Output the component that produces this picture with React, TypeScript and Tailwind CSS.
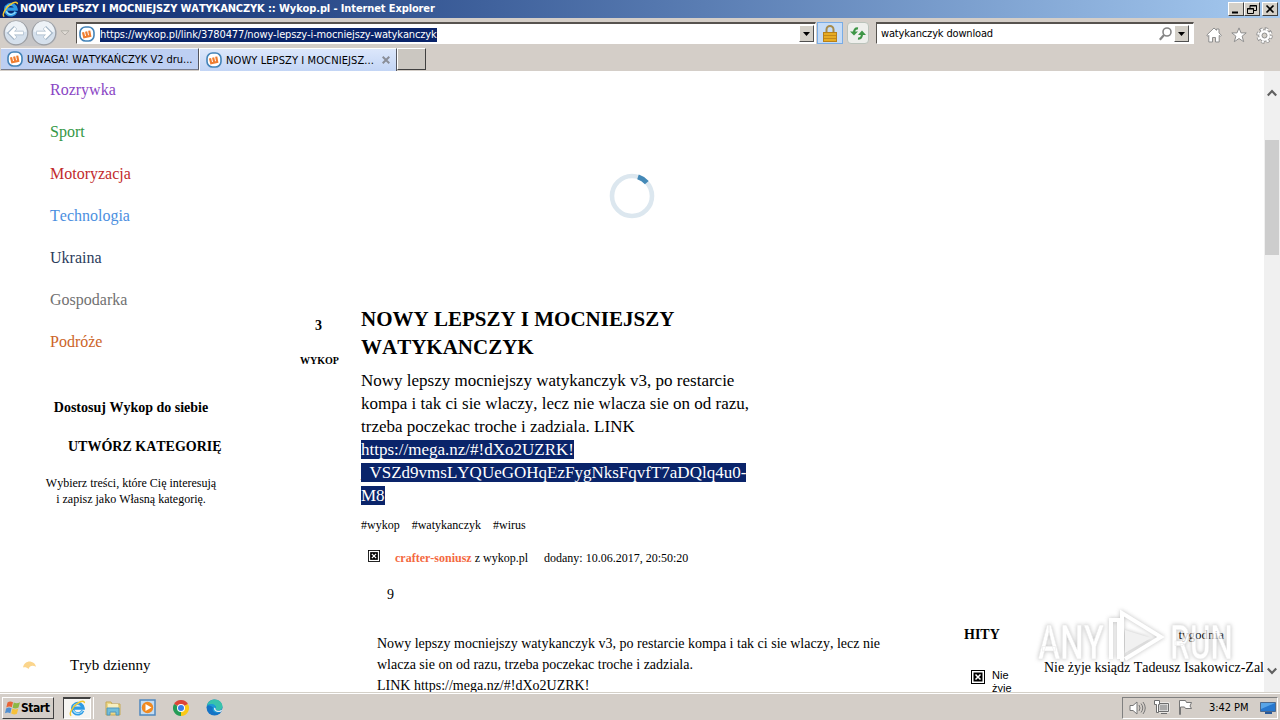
import type { ReactNode } from 'react';

const NAV_ITEMS = [
  { label: 'Rozrywka', color: 'text-[#8a45c4]' },
  { label: 'Sport', color: 'text-[#359846]' },
  { label: 'Motoryzacja', color: 'text-[#c22a2c]' },
  { label: 'Technologia', color: 'text-[#4b8fdf]' },
  { label: 'Ukraina', color: 'text-[#2b3c5c]' },
  { label: 'Gospodarka', color: 'text-[#717171]' },
  { label: 'Podróże', color: 'text-[#cc6428]' },
];

function IeLogo({ size }: { size: number }) {
  return (
    <svg width={size} height={size} viewBox="0 0 18 18" fill="none" className="shrink-0">
      <path d="M14.6 11.3a5.6 5.6 0 1 1 .4-2.6H5.2" stroke="#2f9be4" strokeWidth="3.400" />
      <path d="M14.2 11.6a5.3 5.3 0 0 1-9.600-.8M4.500 7.500q1.500-4 6-3.500" stroke="#a5e2fd" strokeWidth="1.200" />
      <path d="M2.4 16.6C-.6 15 3.4 7.4 9 3.5c4.2-3 7.7-3 7.2-.1" stroke="#f2c62e" strokeWidth="1.5" />
    </svg>
  );
}

function WykopIcon() {
  return (
    <svg width="16" height="16" viewBox="0 0 16 16" fill="none" className="shrink-0">
      <rect x="1" y="1" width="14" height="14" rx="5.500" fill="#fff" stroke="#4383b8" strokeWidth="1.6" />
      <path d="M4 6.2l1.200 5 6-1.400-1-5.200M7.100 5.400l1.100 4.800" stroke="#ef7d30" strokeWidth="2.200" />
    </svg>
  );
}

function WindowButton({ children }: { children: ReactNode }) {
  return (
    <div className="flex h-[14px] w-4 items-center justify-center border border-t-white border-r-[#404040] border-b-[#404040] border-l-white bg-[#d4d0c8]">
      <svg width="12" height="11" viewBox="0 0 12 11" fill="none" stroke="#000">
        {children}
      </svg>
    </div>
  );
}

function TitleBar() {
  return (
    <div className="flex h-[18px] items-center bg-gradient-to-r from-[#0a246a] to-[#a6caf0] pr-0.5 pl-0.5">
      <IeLogo size={17} />
      <span className="flex-1 pl-px text-[11px] leading-[18px] font-bold tracking-[-0.115px] whitespace-nowrap text-white">
        NOWY LEPSZY I MOCNIEJSZY WATYKANCZYK :: Wykop.pl - Internet Explorer
      </span>
      <div className="flex">
        <WindowButton>
          <path d="M2 8.5h6" strokeWidth="2" />
        </WindowButton>
        <WindowButton>
          <path d="M4 4V1.5h6.5v5H8M4 2h7" />
          <path d="M1.5 4.5h6v5h-6zM1 5h7" />
        </WindowButton>
        <div className="ml-0.5">
          <WindowButton>
            <path d="M2.5 1.5l7 7m0-7l-7 7" strokeWidth="1.7" />
          </WindowButton>
        </div>
      </div>
    </div>
  );
}

function NavArrow({ flip = false }: { flip?: boolean }) {
  return (
    <svg width="26" height="26" viewBox="0 0 26 26" fill="none" className={flip ? '-scale-x-100' : ''}>
      <circle cx="13" cy="13" r="11.8" fill="#d5e0ec" stroke="#9b9ea3" strokeWidth="1.2" />
      <path d="M2.5 11.5a10.5 10.5 0 0 1 21 0q-10.500 4-21 0z" fill="#edf2f7" />
      <path d="M20.500 13H7.500M12.500 7.500L7 13l5.500 5.500" stroke="#a2b4c5" strokeWidth="4.400" />
      <path d="M20 13H7.500M12.500 8L7.500 13l5 5" stroke="#fff" strokeWidth="2.800" />
    </svg>
  );
}

function DropButton() {
  return (
    <div className="flex h-[17px] w-[15px] shrink-0 items-center justify-center border border-t-white border-r-[#505050] border-b-[#505050] border-l-white bg-[#d4d0c8]">
      <svg width="7" height="4" viewBox="0 0 7 4">
        <path d="M0 0h7L3.500 4z" />
      </svg>
    </div>
  );
}

function AddressRow() {
  return (
    <div className="flex h-[30px] items-center pl-[3px]">
      <div className="flex w-[54px] gap-0.5 rounded-full bg-[#c6c5c6]">
        <NavArrow />
        <NavArrow flip />
      </div>
      <svg width="10" height="6" viewBox="0 0 10 6" fill="none" className="mr-1.5 ml-[3px]">
        <path d="M1 .8h8L5 5z" fill="#e2ded8" stroke="#b3afa9" />
      </svg>
      <div className="flex h-[22px] w-[740px] items-center border border-t-2 border-t-[#57534f] border-r-white border-b-white border-l-[#57534f] bg-white pr-px pl-0.5">
        <WykopIcon />
        <div className="min-w-0 flex-1 pl-[5px] leading-[14px]">
          <span className="inline-block h-[14px] bg-[#0a246a] text-[11px] tracking-[-0.13px] whitespace-nowrap text-white">
            https://wykop.pl/link/3780477/nowy-lepszy-i-mocniejszy-watykanczyk
          </span>
        </div>
        <DropButton />
      </div>
      <div className="ml-px flex h-[22px] w-[26px] items-center justify-center border border-[#78ace6] bg-[#c6dcf6]">
        <svg width="14" height="17" viewBox="0 0 14 17" fill="none">
          <path d="M3.500 8V4.500a3.500 3.500 0 0 1 7 0V8" stroke="#a68b4b" strokeWidth="2" />
          <rect x=".5" y="7.500" width="13" height="9" fill="#e7ac22" stroke="#b78019" />
          <path d="M1 10.500h12M1 13.500h12" stroke="#c4891a" />
        </svg>
      </div>
      <div className="ml-1 flex h-[22px] w-[22px] items-center justify-center rounded-sm border border-[#bbc3bb] bg-[#eeefec]">
        <svg width="16" height="15" viewBox="0 0 16 15" fill="none" stroke="#3e9646" strokeWidth="2.200">
          <path d="M8 2.500Q4 2 4 7" />
          <path d="M8 12.500q4 .5 4-5" />
          <path d="M0 5.500h8L4 9.500zM8 9h8l-4-4.500z" fill="#3e9646" stroke="none" />
        </svg>
      </div>
      <div className="ml-[7px] flex h-[22px] w-[318px] items-center border border-t-2 border-t-[#57534f] border-r-white border-b-white border-l-[#57534f] bg-white pr-1 pl-1">
        <span className="flex-1 text-[11px] leading-[18px] tracking-[-0.16px]">watykanczyk download</span>
        <svg width="13" height="14" viewBox="0 0 13 14" fill="none" stroke="#858585" className="mr-0.5">
          <circle cx="8" cy="5" r="4" strokeWidth="1.600" />
          <path d="M5 8L.8 12.800" strokeWidth="2.300" />
        </svg>
        <DropButton />
      </div>
      <div className="ml-3 flex items-center gap-[9px] pt-1">
        <svg width="16" height="16" viewBox="0 0 16 16" fill="#fff" stroke="#8e8e8e" className="shrink-0">
          <path d="M.8 8L8 1l2.500 2.300V2H13v4l2.400 2.200-1 1.200-1.200-1V15H9.500v-4.500h-3V15H2.800V8.400l-1 1z" />
        </svg>
        <svg width="16" height="16" viewBox="0 0 16 16" fill="#fff" stroke="#8e8e8e" className="shrink-0">
          <path d="M8 .9l2 5h5.200l-4.100 3.300 1.600 5.500L8 11.500l-4.700 3.200 1.600-5.500L.8 5.900H6z" />
        </svg>
        <svg width="17" height="17" viewBox="0 0 17 17" fill="none" className="shrink-0">
          <circle cx="8.500" cy="8.500" r="6.600" stroke="#8e8e8e" strokeWidth="3.200" strokeDasharray="3.200 1.980" />
          <circle cx="8.500" cy="8.500" r="5.800" fill="#fff" stroke="#8e8e8e" />
          <circle cx="8.500" cy="8.500" r="6.300" stroke="#fff" strokeWidth="2.200" strokeDasharray="2.200 2.748" strokeDashoffset="-.4" />
          <circle cx="8.500" cy="8.500" r="2.500" fill="#d4d0c8" stroke="#8e8e8e" />
        </svg>
      </div>
    </div>
  );
}

function TabsRow() {
  return (
    <div className="flex h-[23px] pl-px">
      <div className="flex h-[22px] w-[198px] items-center border-t border-r border-b border-t-[#f4f6fc] border-r-[#54565f] border-b-[#777c8c] bg-[#bdcff2] pl-1.5">
        <WykopIcon />
        <span className="pt-0.5 pl-1 text-[11px] tracking-[-0.03px] whitespace-nowrap">UWAGA! WATYKAŃCZYK V2 dru...</span>
      </div>
      <div className="flex h-[23px] w-[198px] items-center border-t border-r border-l border-white border-r-[#54565f] bg-gradient-to-b from-[#dce7fb] to-[#c3d5f5] pr-1.5 pl-1.5">
        <WykopIcon />
        <span className="flex-1 pt-0.5 pl-1 text-[11px] tracking-[0.1px] whitespace-nowrap">NOWY LEPSZY I MOCNIEJSZ...</span>
        <svg width="8" height="8" viewBox="0 0 8 8" stroke="#8a8e98" strokeWidth="2">
          <path d="M.7.700l6.600 6.600m0-6.600L.7 7.300" />
        </svg>
      </div>
      <div className="h-[22px] w-[29px] border border-t-white border-r-[#404040] border-b-[#404040] border-l-white bg-[#cbc7c1]" />
    </div>
  );
}

function BrokenImage({ size }: { size: number }) {
  return (
    <svg width={size} height={size} viewBox="0 0 14 14" fill="none" className="shrink-0">
      <rect x=".5" y=".5" width="13" height="13" fill="#fff" stroke="#000" />
      <rect x="2.500" y="2.500" width="9" height="9" fill="#000" />
      <path d="M4.500 4.500l5 5m0-5l-5 5" stroke="#fff" strokeWidth="1.500" />
    </svg>
  );
}

function Sidebar() {
  return (
    <aside className="w-[290px] shrink-0 -mt-0.5">
      <ul className="pl-[50px] text-[16px] leading-[42px]">
        {NAV_ITEMS.map((item) => (
          <li key={item.label} className={item.color}>
            {item.label}
          </li>
        ))}
      </ul>
      <p className="w-[262px] pt-[35px] text-center text-[14px] leading-5 font-bold">Dostosuj Wykop do siebie</p>
      <p className="pt-[19px] pl-[68px] text-[14px] leading-5 font-bold">UTWÓRZ KATEGORIĘ</p>
      <p className="w-[262px] pt-[18px] text-center text-[12px] leading-4">
        Wybierz treści, które Cię interesują
        <br />i zapisz jako Własną kategorię.
      </p>
      <div className="flex items-center gap-[34px] pt-[148px] pl-[23px]">
        <svg width="13" height="9" viewBox="0 0 13 9">
          <path d="M0 6.500C1 2 4.500 0 8 .7c3 .6 4.500 2.700 5 5.100C9.500 4 7 4.500 5.500 8 4 6.400 2 5.800 0 6.500z" fill="#fbd58c" />
        </svg>
        <span className="text-[15px] leading-5">Tryb dzienny</span>
      </div>
    </aside>
  );
}

function Article() {
  return (
    <main className="w-[650px] shrink-0">
      <div className="flex h-[234px] pt-[101px] pl-[318px]">
        <svg width="48" height="48" viewBox="0 0 48 48" fill="none">
          <circle cx="24" cy="24" r="20" stroke="#dce7ef" strokeWidth="4.600" />
          <path d="M30 4.900a20 20 0 0 1 8.800 5.700" stroke="#4489b7" strokeWidth="5" />
        </svg>
      </div>
      <div className="flex">
        <div className="w-[71px] shrink-0 pr-[15px] text-center font-bold">
          <p className="pt-[11px] pl-px text-[14px] leading-5">3</p>
          <p className="pt-[15px] pl-[3px] text-[10px] leading-5">WYKOP</p>
        </div>
        <div className="w-[420px]">
          <h1 className="text-[21px] leading-7 font-bold">
            NOWY LEPSZY I MOCNIEJSZY
            <br />
            WATYKANCZYK
          </h1>
          <p className="pt-2 text-[17px] leading-[23px] whitespace-nowrap">
            Nowy lepszy mocniejszy watykanczyk v3, po restarcie
            <br />
            kompa i tak ci sie wlaczy, lecz nie wlacza sie on od razu,
            <br />
            trzeba poczekac troche i zadziala. LINK
            <br />
            <span className="bg-[#0a246a] text-white">https://mega.nz/#!dXo2UZRK!</span>
            <br />
            <span className="bg-[#0a246a] text-white">
              <span className="text-[#0a246a]">_</span>VSZd9vmsLYQUeGOHqEzFygNksFqvfT7aDQlq4u0-
            </span>
            <br />
            <span className="bg-[#0a246a] text-white">M8</span>
          </p>
          <div className="flex gap-3 pt-2 text-[12px] leading-5">
            <span>#wykop</span>
            <span>#watykanczyk</span>
            <span>#wirus</span>
          </div>
          <div className="flex items-center pt-[13px] pl-[7px] text-[12px] leading-5 whitespace-nowrap">
            <div className="-mt-1 mr-[15px]">
              <BrokenImage size={12} />
            </div>
            <span>
              <b className="text-[#f4693f]">crafter-soniusz</b> z wykop.pl
            </span>
            <span className="pl-4">dodany: 10.06.2017, 20:50:20</span>
          </div>
          <p className="pt-[17px] pl-[26px] text-[14px] leading-5">9</p>
        </div>
      </div>
      <p className="pt-7 pl-[87px] text-[14px] leading-[21px] whitespace-nowrap">
        Nowy lepszy mocniejszy watykanczyk v3, po restarcie kompa i tak ci sie wlaczy, lecz nie
        <br />
        wlacza sie on od razu, trzeba poczekac troche i zadziala.
        <br />
        LINK https://mega.nz/#!dXo2UZRK!
      </p>
    </main>
  );
}

function Hits() {
  return (
    <section className="min-w-0 flex-1 pt-[554px] pl-6">
      <div className="flex items-center justify-between pr-10 leading-5">
        <h2 className="text-[14px] font-bold">HITY</h2>
        <span className="text-[13px]">tygodnia</span>
      </div>
      <div className="flex pt-[13px] pl-[7px]">
        <div className="pt-3">
          <BrokenImage size={14} />
        </div>
        <p className="w-[59px] pt-[11px] pl-[7px] font-['Liberation_Sans',sans-serif] text-[11px] leading-[13px]">
          Nie
          <br />
          żyje
        </p>
        <p className="text-[14px] leading-5 whitespace-nowrap">Nie żyje ksiądz Tadeusz Isakowicz-Zal</p>
      </div>
    </section>
  );
}

function ScrollBar() {
  return (
    <div className="flex w-4 shrink-0 flex-col items-center bg-[#f0f0f0] pt-[18px] pb-[17px]">
      <svg width="10" height="8" viewBox="0 0 10 8" fill="none" stroke="#606060" strokeWidth="2.200">
        <path d="M.8 6.500L5 2l4.200 4.500" />
      </svg>
      <div className="mt-[43px] h-[115px] w-[14px] bg-[#cdcdcd]" />
      <svg width="10" height="8" viewBox="0 0 10 8" fill="none" stroke="#606060" strokeWidth="2.200" className="mt-auto">
        <path d="M.8 1.500L5 6l4.200-4.500" />
      </svg>
    </div>
  );
}

function Watermark() {
  return (
    <svg
      width="210"
      height="70"
      viewBox="0 0 210 70"
      className="absolute right-[38px] bottom-[48px] opacity-75 drop-shadow-[0_0_2px_#aaa]"
      fill="#fff"
    >
      <g className="font-['Roboto',sans-serif] font-medium" fontSize="48" stroke="#e2e2e2" strokeWidth=".6">
        <text x="6" y="57" textLength="66" lengthAdjust="spacingAndGlyphs">
          ANY
        </text>
        <text x="138" y="57" textLength="63" lengthAdjust="spacingAndGlyphs">
          RUN
        </text>
      </g>
      <path d="M79 57V18h8v39M90 59V11l39 24-36 22" fill="none" stroke="#fff" strokeWidth="4" />
      <path d="M93 28l26 8-26 15z" fill="#ededed" />
    </svg>
  );
}

function FolderIcon() {
  return (
    <svg width="18" height="18" viewBox="0 0 18 18" fill="none">
      <path d="M2 3h5l1 2h8v11H2z" fill="#ecd786" stroke="#c6a954" />
      <path d="M4 5h10v5H4z" fill="#f7efbf" />
      <path d="M3 16V9h12v7h-3v-3H6v3z" fill="#70bedb" stroke="#5196bd" />
    </svg>
  );
}

function PlayerIcon() {
  return (
    <svg width="17" height="17" viewBox="0 0 17 17" fill="none">
      <rect x="1" y="1" width="15" height="15" fill="#c4dcf2" stroke="#4f88be" strokeWidth="1.500" />
      <circle cx="8.500" cy="8.500" r="5.700" fill="#f18a21" />
      <path d="M6.500 5l6 3.500-6 3.500z" fill="#fff" />
    </svg>
  );
}

function ChromeIcon() {
  return (
    <svg width="16" height="16" viewBox="0 0 16 16">
      <path d="M8 8L1.070 4A8 8 0 0 1 14.930 4z" fill="#dd4437" />
      <path d="M8 8l6.930-4A8 8 0 0 1 8 16z" fill="#fbc916" />
      <path d="M8 8v8A8 8 0 0 1 1.070 4z" fill="#249c56" />
      <circle cx="8" cy="8" r="4" fill="#fff" />
      <circle cx="8" cy="8" r="3" fill="#397de9" />
    </svg>
  );
}

function EdgeIcon() {
  return (
    <svg width="17" height="17" viewBox="0 0 17 17">
      <circle cx="8.500" cy="8.500" r="8" fill="#1573c5" />
      <path d="M.8 7C2 2.500 5 .5 8.500.5c5 0 8 3.400 8 7 0 2.500-2 4-4.500 4-1.700 0-2.600-.7-2-1.600C11 6.500 5 3.500.8 7z" fill="#38c3ac" />
      <path d="M1 6.500C6 3 10.500 6 10 9c-.5 1.300.3 2.500 2 2.500 1.500.3 3-.2 4-1-.5 1-1 2-1.500 2.500C9 15 5.500 12 7 8.500 5 7 2.500 6 1 6.500z" fill="#1d9bd7" />
      <path d="M9.800 9.800c-.6 1 .5 2 2.200 1.900 2 0 3.500-.7 4.600-1.500l-1.300 2.300c-3.500 1.700-8.500-.6-7.100-4z" fill="#e4edf1" />
    </svg>
  );
}

function Taskbar() {
  return (
    <div className="flex h-7 items-center border-t border-[#d4d0c8] bg-[#d4cec8] shadow-[inset_0_1px_0_#fff]">
      <div className="mt-0.5 ml-0.5 flex h-[22px] w-[52px] items-center border border-t-white border-r-[#404040] border-b-[#404040] border-l-white pl-0.5">
        <svg width="16" height="16" viewBox="0 0 16 16" className="shrink-0">
          <path d="M2.500 2.500Q5 .5 8 2.200L6.800 7.300Q4 5.800 1.300 7.600z" fill="#e86435" />
          <path d="M8.800 2.600q3 1.500 6.200-.3l-1.500 5.200q-3 1.800-5.900.2z" fill="#8cb843" />
          <path d="M1.100 8.400Q4 6.700 6.500 8.200l-1.200 5Q2.700 11.800 0 13.300z" fill="#508fd1" />
          <path d="M7.400 8.600q3 1.600 5.900-.1l-1.400 5.200q-3 1.500-5.700-.1z" fill="#f6c139" />
        </svg>
        <span className="text-[12px] leading-4 font-bold tracking-[-0.45px]">Start</span>
      </div>
      <div className="mt-0.5 ml-[9px] flex h-[22px] w-[28px] items-center justify-center border border-t-2 border-t-[#404040] border-r-white border-b-white border-l-[#404040] bg-[#f6f5f2]">
        <IeLogo size={17} />
      </div>
      <div className="mt-[3px] h-[22px] w-[3px] border-r border-white" />
      <div className="mt-0.5 flex items-center gap-[17px] pl-[10px]">
        <FolderIcon />
        <PlayerIcon />
        <ChromeIcon />
        <EdgeIcon />
      </div>
      <div className="mt-0.5 mr-0.5 ml-auto flex h-[22px] w-[156px] items-center border border-t-[#808080] border-r-white border-b-white border-l-[#808080] pl-1.5">
        <svg width="17" height="16" viewBox="0 0 17 16" fill="none" stroke="#777">
          <path d="M1 5.500h3l4-3.500v12l-4-3.500H1z" fill="#fff" />
          <path d="M10 5q2 3 0 6M12 3.500q3.500 4.500 0 9M14 2q4.500 6 0 12" />
        </svg>
        <svg width="17" height="16" viewBox="0 0 17 16" fill="none" stroke="#6d6d6d" className="mb-0.5 ml-[7px]">
          <path d="M5.500 4.500h10v8h-10z" fill="#a9a9a9" stroke="#fff" strokeWidth="2" />
          <path d="M5.500 4.500h10v8h-10zM8 14.500h6" />
          <path d="M1.500 1.500h5v4h-1v8h-2v-8h-2z" fill="#fff" />
        </svg>
        <svg width="17" height="16" viewBox="0 0 17 16" fill="none" stroke="#777" className="mb-0.5 ml-[7px]">
          <path d="M2.500 15.500V1.500h6l1 2h5l-1.500 3.500 1.500 2.500h-6l-1-1.500h-4v7.500z" fill="#fff" />
        </svg>
        <span className="ml-[15px] w-[51px] pt-px text-[11px] tracking-[-0.05px] whitespace-nowrap">3:42 PM</span>
        <svg width="16" height="14" viewBox="0 0 16 14">
          <path d="M.5 1.500h15v9H.5z" fill="#2777ce" stroke="#4c698d" />
          <path d="M1 2h14L1 8z" fill="#58a4e7" />
          <path d="M5 13h7v-2H5z" fill="#27599b" />
        </svg>
      </div>
    </div>
  );
}

export default function App() {
  return (
    <div className="relative flex h-[720px] w-[1280px] flex-col overflow-hidden bg-white font-['DejaVu_Sans_Condensed','DejaVu_Sans',sans-serif] text-black [font-kerning:none]">
      <header className="shrink-0 bg-[#d4cec8]">
        <TitleBar />
        <AddressRow />
        <TabsRow />
      </header>
      <div className="flex h-[621px] shrink-0">
        <div className="flex min-w-0 flex-1 overflow-hidden font-['Liberation_Serif',serif]">
          <Sidebar />
          <Article />
          <Hits />
        </div>
        <ScrollBar />
      </div>
      <Taskbar />
      <Watermark />
    </div>
  );
}
